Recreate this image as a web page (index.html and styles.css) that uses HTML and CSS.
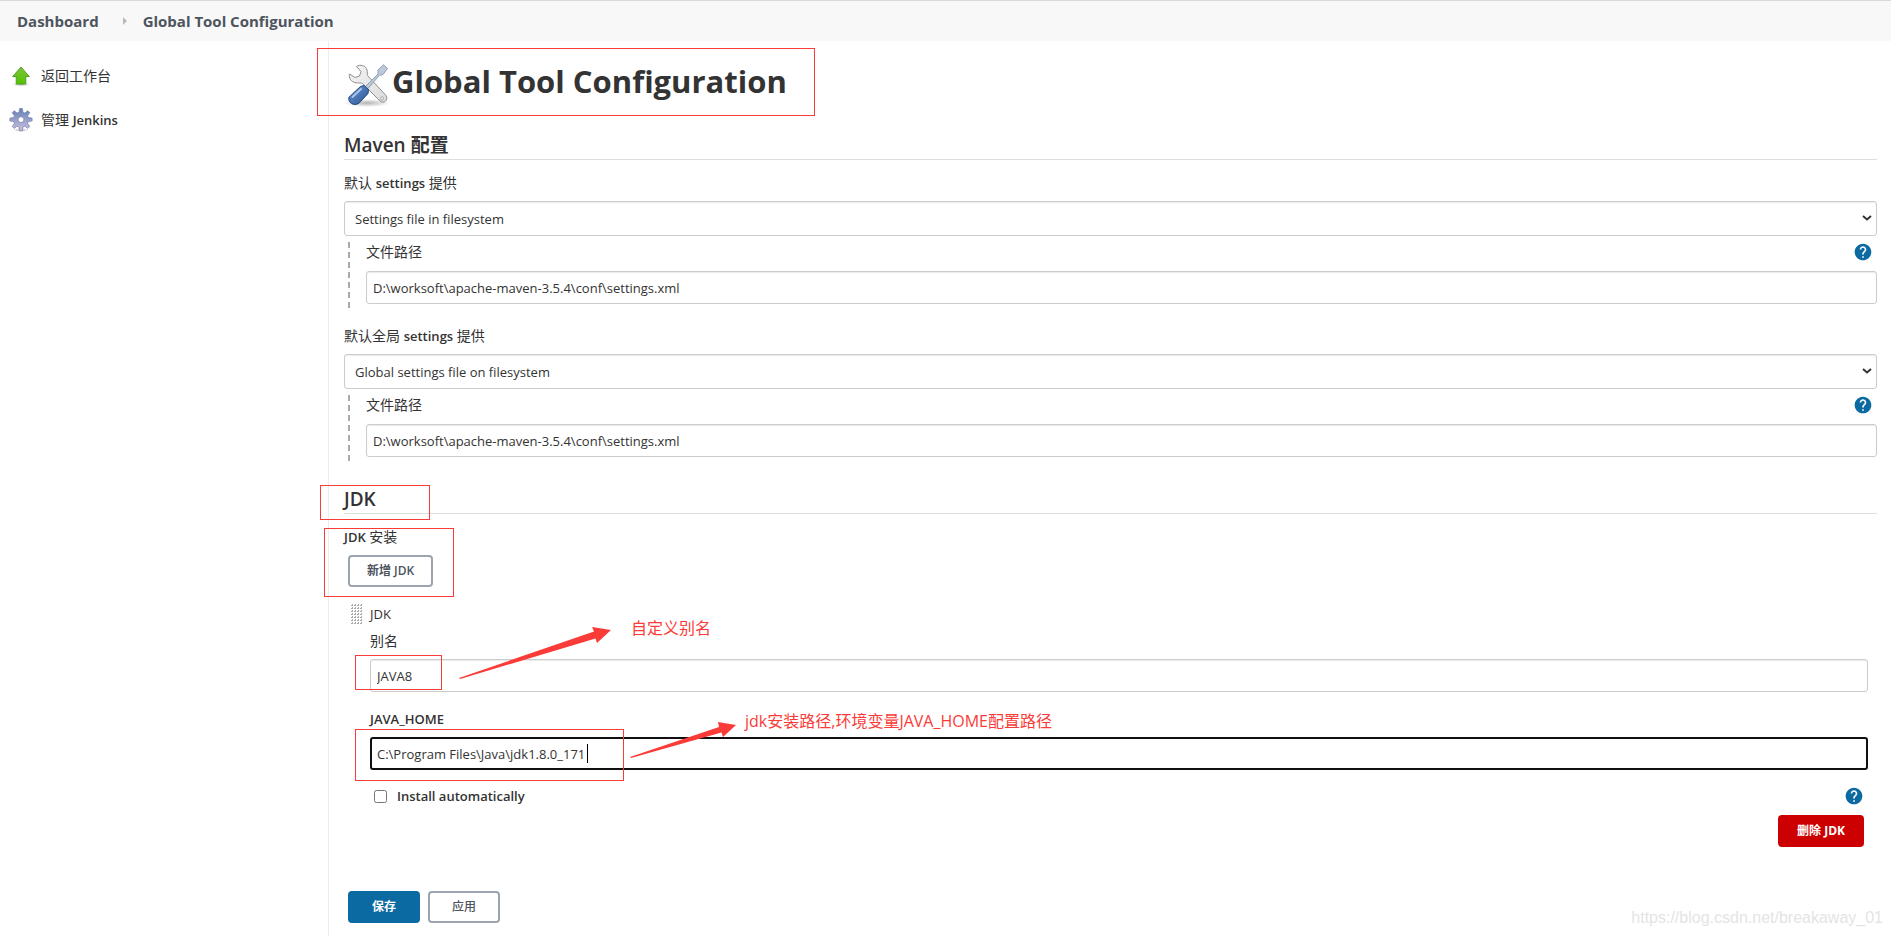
FILE: index.html
```html
<!DOCTYPE html>
<html lang="zh-CN">
<head>
<meta charset="utf-8">
<title>Global Tool Configuration [Jenkins]</title>
<link rel="stylesheet" href="styles.css">
</head>
<body>
<svg width="0" height="0" class="defs" aria-hidden="true">
  <defs>
    <linearGradient id="green" x1="0" y1="0" x2="0" y2="1"><stop offset="0" stop-color="#7fc23c"/><stop offset="1" stop-color="#52c400"/></linearGradient>
    <linearGradient id="steel" x1="0" y1="0" x2="0" y2="1"><stop offset="0" stop-color="#6280b5"/><stop offset="1" stop-color="#c9c0e0"/></linearGradient>
    <linearGradient id="silver" x1="0" y1="0" x2="1" y2="1"><stop offset="0" stop-color="#f4f4f4"/><stop offset="1" stop-color="#dcdcdc"/></linearGradient>
    <linearGradient id="blue" x1="0" y1="0" x2="1" y2="1"><stop offset="0" stop-color="#6b95cf"/><stop offset="1" stop-color="#2a5796"/></linearGradient>
    <radialGradient id="shade"><stop offset="0" stop-color="#000" stop-opacity=".3"/><stop offset="1" stop-color="#000" stop-opacity="0"/></radialGradient>
    <symbol id="help" viewBox="0 0 24 24"><path fill="#0b6aa2" d="M12 2C6.480 2 2 6.480 2 12s4.480 10 10 10 10-4.480 10-10S17.520 2 12 2zm1 17h-2v-2h2v2zm2.070-7.750l-.9.920C13.450 12.900 13 13.500 13 15h-2v-.5c0-1.100.45-2.100 1.170-2.830l1.240-1.260c.37-.36.59-.86.59-1.410 0-1.100-.9-2-2-2s-2 .9-2 2H8c0-2.210 1.790-4 4-4s4 1.790 4 4c0 .88-.36 1.680-.93 2.250z"/></symbol>
  </defs>
</svg>

<nav class="crumbs" aria-label="Breadcrumb">
  <a href="#">Dashboard</a>
  <svg class="crumb-sep" width="4" height="8" viewBox="0 0 4 8"><path d="M0 0l4 4-4 4z" fill="#b9b9b9"/></svg>
  <a href="#">Global Tool Configuration</a>
</nav>

<div class="page">
  <aside class="side">
    <a class="task" href="#">
      <svg width="24" height="24" viewBox="0 0 24 24"><ellipse cx="12" cy="20.500" rx="9" ry="2" fill="url(#shade)"/><path d="M12 3L20.300 12.500H16.800V20H7.200V12.500H3.700z" fill="url(#green)" stroke="#4a9a1c" stroke-width=".9" stroke-linejoin="round"/></svg>
      <span>返回工作台</span>
    </a>
    <a class="task" href="#">
      <svg width="24" height="24" viewBox="0 0 24 24"><ellipse cx="12" cy="22" rx="8" ry="2" fill="url(#shade)"/><g fill="url(#steel)" stroke="#767ea6" stroke-width=".7"><path fill-rule="evenodd" stroke-linejoin="round" d="M10.600.5h2.800l.5 3.700 2 .8 2.900-2.300 2 2-2.200 3 .8 1.900 3.700.5v2.900l-3.700.5-.8 2 2.200 2.900-2 2-2.900-2.200-2 .8-.5 3.700h-2.800l-.5-3.700-2-.8-2.900 2.200-2-2 2.200-2.900-.8-2L.9 13v-2.900l3.700-.5.8-1.900-2.200-3 2-2L8.100 5l2-.8zM12 8.700a2.900 2.900 0 1 0 0 5.800 2.900 2.900 0 0 0 0-5.800z"/></g></svg>
      <span>管理 <span class="latin">Jenkins</span></span>
    </a>
  </aside>

  <main class="main">
    <h1 class="title">
      <svg width="48" height="48" viewBox="1 0 48 48"><ellipse cx="24" cy="43" rx="23" ry="4" fill="url(#shade)"/>
        <path d="M13.500 6.500C17 4 23 5.500 24 10c.5 2.500 0 4 .5 5.500L43 35.500c3 4-2.500 9-6 5.500L19.500 23.500c-2-1-4-.2-6.500-.7C8 22 5.500 18 6.500 14l5.500 3.500 4.500-1.500 1.500-4.500z" fill="url(#silver)" stroke="#8f8f8f"/>
        <circle cx="39" cy="38.500" r="1.600" fill="#eee" stroke="#999" stroke-width=".8"/>
        <path d="M21.500 27.500L35 14v-4l5.500-5.200 4 3.700L40 14.500l-3.500.8L24 29.500z" fill="#bccbdc" stroke="#8494a8" stroke-width=".9"/>
        <path d="M17.500 26.500l3.500-1 4.500 4-.5 4L16 43.200c-5.500 3.500-11.500-1-10-6z" fill="url(#blue)" stroke="#1f477f"/>
        <path d="M9.500 37l8.500-8" stroke="#a9c8ee" stroke-width="2" stroke-linecap="round"/></svg>
      <span>Global Tool Configuration</span>
    </h1>

    <form class="config">
      <section>
        <h2 class="section-head">Maven 配置</h2>
        <div class="group">
          <label class="label" for="s1">默认 <span class="latin">settings</span> 提供</label>
          <div class="select-wrap"><select class="select" id="s1"><option>Settings file in filesystem</option></select><svg class="chevron" width="10" height="6" viewBox="0 0 10 6"><path d="M1 1l4 3.500L9 1" fill="none" stroke="#333" stroke-width="2"/></svg></div>
          <div class="nested">
            <div class="label-row"><label class="label" for="p1">文件路径</label><button type="button" class="help" aria-label="Help"><svg width="20" height="20"><use href="#help"/></svg></button></div>
            <input class="input" id="p1" type="text" value="D:\worksoft\apache-maven-3.5.4\conf\settings.xml">
          </div>
        </div>
        <div class="group">
          <label class="label" for="s2">默认全局 <span class="latin">settings</span> 提供</label>
          <div class="select-wrap"><select class="select" id="s2"><option>Global settings file on filesystem</option></select><svg class="chevron" width="10" height="6" viewBox="0 0 10 6"><path d="M1 1l4 3.500L9 1" fill="none" stroke="#333" stroke-width="2"/></svg></div>
          <div class="nested">
            <div class="label-row"><label class="label" for="p2">文件路径</label><button type="button" class="help" aria-label="Help"><svg width="20" height="20"><use href="#help"/></svg></button></div>
            <input class="input" id="p2" type="text" value="D:\worksoft\apache-maven-3.5.4\conf\settings.xml">
          </div>
        </div>
      </section>

      <section>
        <h2 class="section-head">JDK</h2>
        <div class="label"><span class="latin">JDK</span> 安装</div>
        <div class="add-row"><button type="button" class="btn">新增 JDK</button></div>
        <div class="tool">
          <div class="tool-head">
            <svg width="12" height="20" viewBox="0 0 12 20"><defs><pattern id="grip" width="3" height="3" patternUnits="userSpaceOnUse"><path d="M0 1h2v1H0zM1 0h1v1H1z" fill="#aaa"/></pattern></defs><rect width="12" height="20" fill="url(#grip)"/></svg>
            <span class="latin">JDK</span>
          </div>
          <div class="tool-body">
            <label class="label" for="name">别名</label>
            <input class="input" id="name" type="text" value="JAVA8">
            <label class="label home-label" for="home"><span class="latin">JAVA_HOME</span></label>
            <div class="focus-wrap"><input class="input focused" id="home" type="text" value="C:\Program Files\Java\jdk1.8.0_171"><span class="caret"></span></div>
            <div class="auto-row">
              <input type="checkbox" class="check" id="auto"><label class="auto-label" for="auto">Install automatically</label>
              <button type="button" class="help" aria-label="Help"><svg width="20" height="20"><use href="#help"/></svg></button>
            </div>
            <div class="delete-row"><button type="button" class="btn danger">删除 JDK</button></div>
          </div>
        </div>
      </section>

      <div class="actions">
        <button type="button" class="btn primary">保存</button>
        <button type="button" class="btn apply">应用</button>
      </div>
    </form>
  </main>
</div>

<div class="notes">
  <svg class="marks" width="900" height="800" viewBox="0 0 900 800">
    <g fill="none" stroke="#fb3b38">
      <rect x="317.500" y="48.500" width="497" height="67"/>
      <rect x="320.500" y="485.500" width="109" height="34"/>
      <rect x="324.500" y="528.500" width="129" height="68"/>
      <rect x="355.500" y="655.500" width="86" height="34"/>
      <rect x="355.500" y="729.500" width="268" height="51"/>
    </g>
    <g fill="#fb3b38">
      <path d="M459 678L594 631.500 592 627 611 630 597 643 595.500 638.500 460 679z"/>
      <path d="M630 757L719 727 718 722 736 725 723 737 721.500 732.500 631 758z"/>
    </g>
  </svg>
  <span class="note note-alias">自定义别名</span>
  <span class="note note-home">jdk安装路径,环境变量JAVA_HOME配置路径</span>
</div>
<div class="watermark">https://blog.csdn.net/breakaway_01</div>
</body>
</html>
```

FILE: styles.css
```css
* { box-sizing: border-box; }
body {
  position: relative;
  margin: 0;
  min-height: 100vh;
  display: flex;
  flex-direction: column;
  background: #fff;
  color: #333;
  font: 14px/20px "Open Sans", "Noto Sans CJK SC", sans-serif;
}
a { color: inherit; text-decoration: none; }
button, input, select { font-family: inherit; color: inherit; margin: 0; }
svg { display: block; flex: none; }
.defs { position: absolute; }
.latin { font-size: 13px; }

.crumbs {
  display: flex;
  align-items: center;
  height: 41px;
  padding: 0 17px;
  border-top: 1px solid #d9d9de;
  background: #f8f8f8;
  color: #4d545d;
  font-size: 15px;
  font-weight: 700;
}
.crumb-sep { margin: 0 16px 0 24px; }

.page { flex: 1; display: flex; }
.side {
  flex: none;
  width: 328px;
  padding: 23px 9px;
  display: flex;
  flex-direction: column;
  gap: 20px;
}
.task { display: flex; align-items: center; gap: 8px; height: 24px; }
.task .latin { font-weight: 600; }
.main { flex: 1; min-width: 0; padding: 19px 14px 0 15px; border-left: 1px solid #e6eeee; }

.title {
  display: flex;
  margin: 0 0 24px;
  height: 48px;
  font-size: 31px;
  line-height: 42px;
  font-weight: 700;
}
.section-head {
  margin: 0 0 13px;
  height: 28px;
  border-bottom: 1px solid #dcdfdf;
  font-size: 19px;
  line-height: 26px;
  font-weight: 600;
}
.label { display: block; line-height: 20px; font-weight: 400; }
.label .latin { font-weight: 600; }
.group { margin-bottom: 17px; }
.select-wrap { position: relative; margin-top: 8px; }
.select, .input {
  display: block;
  width: 100%;
  border: 1px solid #ccc;
  border-radius: 3px;
  background: #fff;
  box-shadow: inset 0 1px 1px rgba(0, 0, 0, 0.08);
  font-size: 13px;
  line-height: 20px;
  outline: 0;
}
.select { height: 35px; padding: 0 10px; appearance: none; }
.input { height: 33px; padding: 0 6px; }
.chevron { position: absolute; right: 5px; top: 14px; }
.nested {
  margin: 6px 0 0 4px;
  padding: 0 0 5px 18px;
  background: repeating-linear-gradient(#aaa 0 6px, transparent 6px 10px) 0 0 / 2px 100% no-repeat;
}
.label-row { display: flex; justify-content: space-between; align-items: center; height: 20px; margin-bottom: 9px; }
.help { display: block; border: 0; padding: 0; background: none; margin-right: 4px; }

.group + .group { margin-bottom: 24px; }
.add-row { margin-top: 8px; padding-left: 4px; }
.btn {
  height: 32px;
  min-width: 72px;
  padding: 0 17px;
  border: 2px solid #9aa5af;
  border-radius: 4px;
  background: #fff;
  color: #4d545d;
  font-size: 12px;
  line-height: 20px;
  font-weight: 600;
}
.primary { border-color: #0b6aa2; background: #0b6aa2; color: #fff; font-weight: 700; }
.danger { border-color: #c00; background: #c00; color: #fff; font-weight: 700; }
.apply { font-weight: 500; }
.tool { margin-top: 17px; padding: 0 9px 0 7px; }
.tool-head { display: flex; align-items: center; gap: 7px; height: 20px; }
.tool-body { padding: 7px 0 0 19px; }
.tool-body .input { margin-top: 8px; }
.home-label { margin-top: 17px; }
.focus-wrap { position: relative; }
.tool-body .focused { border: 2px solid #101010; padding: 0 5px; box-shadow: none; }
.caret { position: absolute; left: 217px; top: 7px; width: 1px; height: 19px; background: #000; }
.auto-row { display: flex; align-items: center; height: 20px; margin-top: 16px; padding-left: 4px; }
.check { width: 13px; height: 13px; }
.auto-label { flex: 1; padding-left: 10px; font-size: 13px; font-weight: 600; }
.delete-row { display: flex; justify-content: flex-end; margin-top: 9px; padding-right: 4px; }
.actions { display: flex; gap: 8px; margin-top: 44px; padding: 0 0 13px 4px; }

.notes { position: absolute; left: 0; top: 0; pointer-events: none; }
.marks { position: absolute; left: 0; top: 0; }
.note { position: absolute; color: #fb3b38; font-size: 16px; line-height: 24px; white-space: nowrap; }
.note-alias { left: 631px; top: 616px; }
.note-home { left: 745px; top: 709px; }
.watermark {
  position: absolute;
  right: 8px;
  bottom: 8px;
  color: #e4e4e4;
  font: 16px/20px "Liberation Sans", Arial, sans-serif;
}
```
